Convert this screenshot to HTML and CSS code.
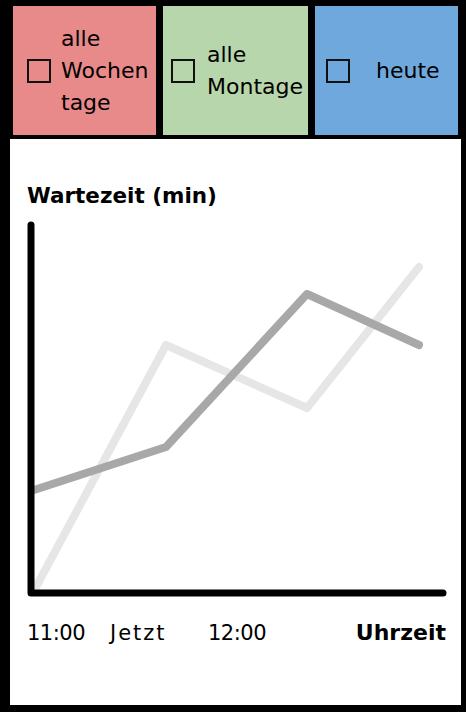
FILE: index.html
```html
<!DOCTYPE html>
<html lang="de">
<head>
<meta charset="utf-8">
<title>Wartezeit</title>
<link rel="stylesheet" href="styles.css">
</head>
<body>
<div class="app">
  <div class="filters">
    <div class="filter filter-red">
      <span class="check"></span>
      <span class="filter-label">alle<br>Wochen<br>tage</span>
    </div>
    <div class="filter filter-green">
      <span class="check"></span>
      <span class="filter-label">alle<br>Montage</span>
    </div>
    <div class="filter filter-blue">
      <span class="check"></span>
      <span class="filter-label">heute</span>
    </div>
  </div>
  <div class="panel">
    <div class="chart-title">Wartezeit (min)</div>
    <svg class="chart" width="451" height="385" viewBox="0 0 451 385" xmlns="http://www.w3.org/2000/svg">
      <polyline points="26,372 156,130 297,193 409,52" fill="none" stroke="#e6e6e6" stroke-width="8" stroke-linecap="round" stroke-linejoin="round"/>
      <polyline points="24,275 156,232 297,79 409,130" fill="none" stroke="#a8a8a8" stroke-width="8" stroke-linecap="round" stroke-linejoin="round"/>
      <path d="M21 10 L21 378 L433 378" fill="none" stroke="#000" stroke-width="7" stroke-linecap="round" stroke-linejoin="round"/>
    </svg>
    <div class="axis-labels">
      <span class="tick">11:00</span>
      <span class="tick tick-wide">Jetzt</span>
      <span class="tick">12:00</span>
      <span class="axis-name">Uhrzeit</span>
    </div>
  </div>
</div>
</body>
</html>
```

FILE: styles.css
```css
html, body {
  margin: 0;
  padding: 0;
  background: #000;
}

body {
  width: 466px;
  height: 712px;
  overflow: hidden;
  font-family: "DejaVu Sans", sans-serif;
  color: #000;
}

.app {
  display: flex;
  flex-direction: column;
}

.filters {
  display: flex;
  gap: 7px;
  padding: 6px 0 0 13px;
  height: 129px;
}

.filter {
  display: flex;
  align-items: center;
  height: 129px;
  width: 143px;
  box-sizing: border-box;
  font-size: 22px;
  line-height: 32px;
}

.filter-red {
  background: #e88a8a;
  padding-left: 14px;
  gap: 10px;
}

.filter-green {
  background: #b8d6ab;
  width: 145px;
  padding-left: 8px;
  gap: 12px;
  white-space: nowrap;
}

.filter-blue {
  background: #6fa8dc;
  padding-left: 11px;
  gap: 26px;
}

.check {
  flex: none;
  width: 24px;
  height: 24px;
  box-sizing: border-box;
  border: 2px solid #111;
}

.panel {
  margin: 4px 0 0 10px;
  width: 451px;
  height: 566px;
  background: #fff;
}

.chart-title {
  padding: 44px 0 0 17px;
  font-size: 21.5px;
  line-height: 26px;
  font-weight: bold;
}

.chart {
  display: block;
  margin-top: 6px;
}

.axis-labels {
  display: grid;
  grid-template-columns: 83px 98px 1fr auto;
  padding: 0 15px 0 17px;
  margin-top: 20px;
  font-size: 22px;
  line-height: 26px;
}

.tick {
  font-size: 21px;
  letter-spacing: -0.5px;
}

.tick-wide {
  letter-spacing: 2px;
}

.axis-name {
  font-weight: bold;
}
```
